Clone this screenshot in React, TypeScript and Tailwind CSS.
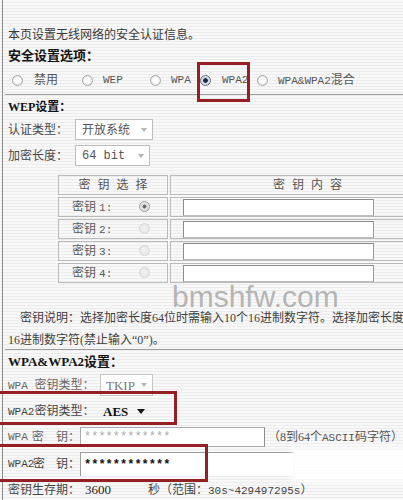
import React from "react";

type RadioProps = { on?: boolean; tone?: "normal" | "muted" | "faint" };

function Radio({ on = false, tone = "normal" }: RadioProps) {
  if (on && tone === "muted") {
    return (
      <span className="inline-block w-[11px] h-[11px] shrink-0 rounded-full border border-[#9a9a9a] bg-[radial-gradient(circle,#6b6b6b_0,#6b6b6b_28%,#d9d9d9_34%,#f4f4f4_100%)]" />
    );
  }
  if (on) {
    return (
      <span className="inline-block w-[11px] h-[11px] shrink-0 rounded-full border border-[#5f6f82] bg-[radial-gradient(circle,#15304e_0,#15304e_32%,#c9d4df_40%,#eef2f6_100%)]" />
    );
  }
  if (tone === "faint") {
    return (
      <span className="inline-block w-[11px] h-[11px] shrink-0 rounded-full border border-[#d6d6d6] bg-[radial-gradient(circle,#f2f2f2_0,#e4e4e4_100%)]" />
    );
  }
  return (
    <span className="inline-block w-[11px] h-[11px] shrink-0 rounded-full border border-[#a8a8a8] bg-[radial-gradient(circle,#ffffff_0,#ffffff_35%,#d6d6d6_100%)]" />
  );
}

function Caret({ dark = false }: { dark?: boolean }) {
  return dark ? (
    <span className="w-0 h-0 border-x-[4px] border-x-transparent border-t-[5px] border-t-[#111]" />
  ) : (
    <span className="w-0 h-0 border-x-[3px] border-x-transparent border-t-[4px] border-t-[#b4b4b4]" />
  );
}

const latin = "font-['Liberation_Mono'] text-[11px]";

function KeyRow({ n, on }: { n: number; on?: boolean }) {
  return (
    <div className="flex gap-[2px] h-[20px]">
      <div className="w-[110px] shrink-0 border border-[#b9b9b9] flex items-center pl-[13px] pr-[17px] text-[#5a5a5a]">
        <span>
          密钥 <span className={latin}>{n}:</span>
        </span>
        <span className="ml-auto">
          <Radio on={on} tone={on ? "muted" : "faint"} />
        </span>
      </div>
      <div className="flex-1 border border-[#b9b9b9] flex items-center pl-[12px]">
        <div className="w-[191px] h-[17px] bg-white border border-[#8d8d8d] border-b-[#bdbdbd] border-r-[#9a9a9a]" />
      </div>
    </div>
  );
}

function KeyLabel({ prefix, tone }: { prefix: string; tone: string }) {
  return (
    <span className={`w-[72px] shrink-0 flex items-center whitespace-nowrap ${tone}`}>
      <span className={`${latin} w-[25px]`}>{prefix}</span>
      <span>密</span>
      <span className="inline-block w-[13px]" />
      <span>钥：</span>
    </span>
  );
}

export default function App() {
  return (
    <div className="relative w-[403px] h-[500px] overflow-hidden bg-[repeating-linear-gradient(to_bottom,#f8f8f8_0px,#f8f8f8_2px,#ececec_2px,#ececec_3px)] font-['Liberation_Serif','Noto_Sans_CJK_SC',serif] text-[12px] leading-none text-[#454545]">
      <div className="ml-[2px] h-full border-l border-[#8c8c8c] pl-[5px] pt-[26px]">
        <div className="h-[17px] flex items-center text-[#3a3a3a]">本页设置无线网络的安全认证信息。</div>
        <div className="mt-[3px] h-[18px] flex items-center font-bold text-[13px] text-[#141414]">安全设置选项：</div>

        {/* security mode options */}
        <div className="mt-[6px] h-[20px] flex items-center ml-[4px] text-[#555]">
          <div className="w-[70px] flex items-center gap-[11px]">
            <Radio />
            <span>禁用</span>
          </div>
          <div className="w-[68px] flex items-center gap-[10px]">
            <Radio />
            <span className={latin}>WEP</span>
          </div>
          <div className="w-[50px] flex items-center gap-[10px]">
            <Radio />
            <span className={latin}>WPA</span>
          </div>
          <div className="w-[57px] flex items-center gap-[11px]">
            <Radio on />
            <span className={latin}>WPA2</span>
          </div>
          <div className="flex items-center gap-[10px]">
            <Radio />
            <span>
              <span className={latin}>WPA&amp;WPA2</span>混合
            </span>
          </div>
        </div>

        <div className="mt-[4px] -ml-[3px] h-px bg-[#9c9c9c]" />

        <div className="mt-[3px] h-[18px] flex items-center font-bold text-[#141414]">WEP设置：</div>

        <div className="mt-[3px] h-[21px] flex items-center">
          <span className="w-[67px] text-[#4a4a4a]">认证类型：</span>
          <div className="w-[78px] h-[21px] bg-white border border-[#bdbdbd] flex items-center justify-between pl-[6px] pr-[5px] text-[#555]">
            <span>开放系统</span>
            <Caret />
          </div>
        </div>
        <div className="mt-[5px] h-[21px] flex items-center">
          <span className="w-[67px] text-[#4a4a4a]">加密长度：</span>
          <div className="w-[75px] h-[21px] bg-white border border-[#bdbdbd] flex items-center justify-between pl-[6px] pr-[5px] text-[#555]">
            <span className="font-['Liberation_Mono'] text-[12px]">64 bit</span>
            <Caret />
          </div>
        </div>

        {/* WEP key table */}
        <div className="mt-[9px] ml-[50px] w-[387px] flex flex-col gap-[2px]">
          <div className="flex gap-[2px] h-[20px] text-[#555]">
            <div className="w-[110px] shrink-0 border border-[#b9b9b9] flex items-center justify-center tracking-[7px] pl-[7px]">密钥选择</div>
            <div className="flex-1 border border-[#b9b9b9] flex items-center justify-center tracking-[7px] pl-[7px]">密钥内容</div>
          </div>
          <KeyRow n={1} on />
          <KeyRow n={2} />
          <KeyRow n={3} />
          <KeyRow n={4} />
        </div>

        <div className="mt-[27px] h-[16px] flex items-center pl-[12px] whitespace-nowrap text-[#3e3e3e]">
          密钥说明：选择加密长度64位时需输入10个16进制数字符。选择加密长度
        </div>
        <div className="mt-[6px] h-[16px] flex items-center whitespace-nowrap text-[#3e3e3e]">
          16进制数字符(禁止输入“0”)。
        </div>

        <div className="mt-[1px] -ml-[3px] h-px bg-[#9c9c9c]" />

        <div className="mt-[2px] h-[18px] flex items-center font-bold text-[13px] text-[#141414]">WPA&amp;WPA2设置：</div>

        <div className="mt-[4px] h-[22px] flex items-center">
          <span className="w-[92px] whitespace-nowrap text-[#666]">
            <span className={latin}>WPA </span>密钥类型：
          </span>
          <div className="w-[53px] h-[22px] bg-white border border-[#c4c4c4] flex items-center justify-between pl-[5px] pr-[5px] text-[#777]">
            <span className="font-['Liberation_Serif'] text-[13px]">TKIP</span>
            <Caret />
          </div>
        </div>

        <div className="mt-[6px] h-[18px] flex items-center">
          <span className="w-[92px] whitespace-nowrap text-[#444]">
            <span className={latin}>WPA2</span>密钥类型：
          </span>
          <div className="w-[48px] h-[18px] flex items-center justify-between pl-[3px] pr-[3px] text-[#111]">
            <span className="font-['Liberation_Serif'] font-bold text-[13px]">AES</span>
            <Caret dark />
          </div>
        </div>

        <div className="mt-[7px] h-[20px] flex items-center">
          <KeyLabel prefix="WPA" tone="text-[#666]" />
          <div className="w-[223px] h-[20px] bg-white border border-[#a9a9a9] border-r-[#8e8e8e] flex items-center pl-[3px] text-[#aaa] font-['Liberation_Mono'] text-[12px]">
            ************
          </div>
          <span className="ml-[3px] whitespace-nowrap text-[#555]">
            （8到64个<span className={latin}>ASCII</span>码字符）
          </span>
        </div>

        <div className="mt-[5px] h-[24px] flex items-center">
          <KeyLabel prefix="WPA2" tone="text-[#444]" />
          <div className="w-[213px] h-[24px] bg-white border-t border-l border-[#9c9c9c] flex items-center pl-[3px] text-[#111] font-['Liberation_Mono'] font-bold text-[12px]">
            ************
          </div>
        </div>

        <div className="mt-[5px] h-[18px] flex items-start">
          <span className="w-[72px] pt-[3px] whitespace-nowrap text-[#444]">密钥生存期：</span>
          <div className="w-[67px] h-[18px] border-t border-[#a9a9a9] pl-[5px] pt-[1px] text-[#222] text-[13px]">3600</div>
          <span className="ml-[1px] pt-[3px] whitespace-nowrap text-[#444]">
            秒（范围：<span className={latin}>30s~429497295s</span>）
          </span>
        </div>
      </div>

      {/* site watermark */}
      <div className="absolute left-[172px] top-[282px] font-['Liberation_Sans'] text-[30px] leading-none text-[#a3a3a3]/80 pointer-events-none">
        bmshfw.com
      </div>

      {/* smudged corner */}
      <div className="absolute left-[292px] top-[448px] w-[120px] h-[34px] bg-white/90 blur-[3px]" />

      {/* highlight frames */}
      <div className="absolute left-[197px] top-[62px] w-[53px] h-[40px] border-[3px] border-[#951f22]" />
      <div className="absolute left-[-3px] top-[391px] w-[180px] h-[34px] border-[3px] border-[#951f22]" />
      <div className="absolute left-[-3px] top-[444px] w-[211px] h-[38px] border-[3px] border-[#951f22]" />
    </div>
  );
}
